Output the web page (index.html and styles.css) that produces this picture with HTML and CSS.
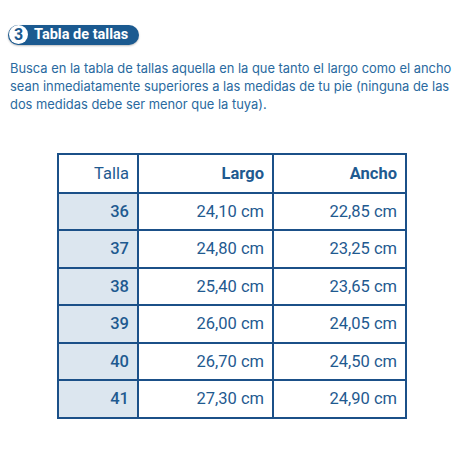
FILE: index.html
```html
<!DOCTYPE html>
<html lang="es">
<head>
    <meta charset="utf-8">
    <title>Tabla de tallas</title>
    <link rel="stylesheet" href="styles.css">
</head>
<body>
    <h2 class="paso"><span class="num">3</span>Tabla de tallas</h2>
    <p class="intro">Busca en la tabla de tallas aquella en la que tanto el largo como el ancho sean inmediatamente superiores a las medidas de tu pie (ninguna de las dos medidas debe ser menor que la tuya).</p>

    <table class="tallas">
        <tr>
            <th class="talla">Talla</th>
            <th class="fuerte">Largo</th>
            <th class="fuerte">Ancho</th>
        </tr>
        <tr><td class="num-talla">36</td><td>24,10 cm</td><td>22,85 cm</td></tr>
        <tr><td class="num-talla">37</td><td>24,80 cm</td><td>23,25 cm</td></tr>
        <tr><td class="num-talla">38</td><td>25,40 cm</td><td>23,65 cm</td></tr>
        <tr><td class="num-talla">39</td><td>26,00 cm</td><td>24,05 cm</td></tr>
        <tr><td class="num-talla">40</td><td>26,70 cm</td><td>24,50 cm</td></tr>
        <tr><td class="num-talla">41</td><td>27,30 cm</td><td>24,90 cm</td></tr>
    </table>
</body>
</html>
```

FILE: styles.css
```css
body {
    margin: 0;
    padding: 24px 0 0 8px;
    background-color: #ffffff;
    font-family: Inter, "Noto Sans", sans-serif;
    color: #22609a;
}

.paso {
    display: inline-flex;
    align-items: center;
    gap: 6px;
    margin: 0;
    height: 20px;
    padding: 0 11px 0 1px;
    border-radius: 10px;
    background-color: #1b5a90;
    color: #ffffff;
    font-family: Roboto, sans-serif;
    font-size: 14.5px;
    font-weight: 700;
    box-shadow: 0 1px 2px rgba(0, 0, 0, 0.25);
}

.paso .num {
    display: inline-flex;
    align-items: center;
    justify-content: center;
    width: 19px;
    height: 19px;
    border-radius: 50%;
    background-color: #ffffff;
    color: #1b5a90;
    font-size: 16px;
    font-weight: 700;
}

.intro {
    margin: 15px 0 0 2px;
    width: 445px;
    font-size: 12.9px;
    line-height: 18px;
    color: #2a6aa0;
}

.tallas {
    margin: 39px 0 0 49px;
    border-collapse: collapse;
    font-family: Roboto, sans-serif;
    font-size: 16.5px;
    color: #1f5a90;
    border: 2px solid #1b5088;
}

.tallas th,
.tallas td {
    border: 2px solid #1b5088;
    text-align: right;
    padding: 0 8px;
    height: 35.5px;
}

.tallas th {
    height: 37px;
    font-weight: 400;
}

.tallas th.talla {
    width: 62px;
}

.tallas th.fuerte {
    font-weight: 700;
    width: 117px;
}

.tallas th.fuerte:last-child {
    width: 115px;
}

.num-talla {
    background-color: #dce6ef;
    font-weight: 500;
}
```
